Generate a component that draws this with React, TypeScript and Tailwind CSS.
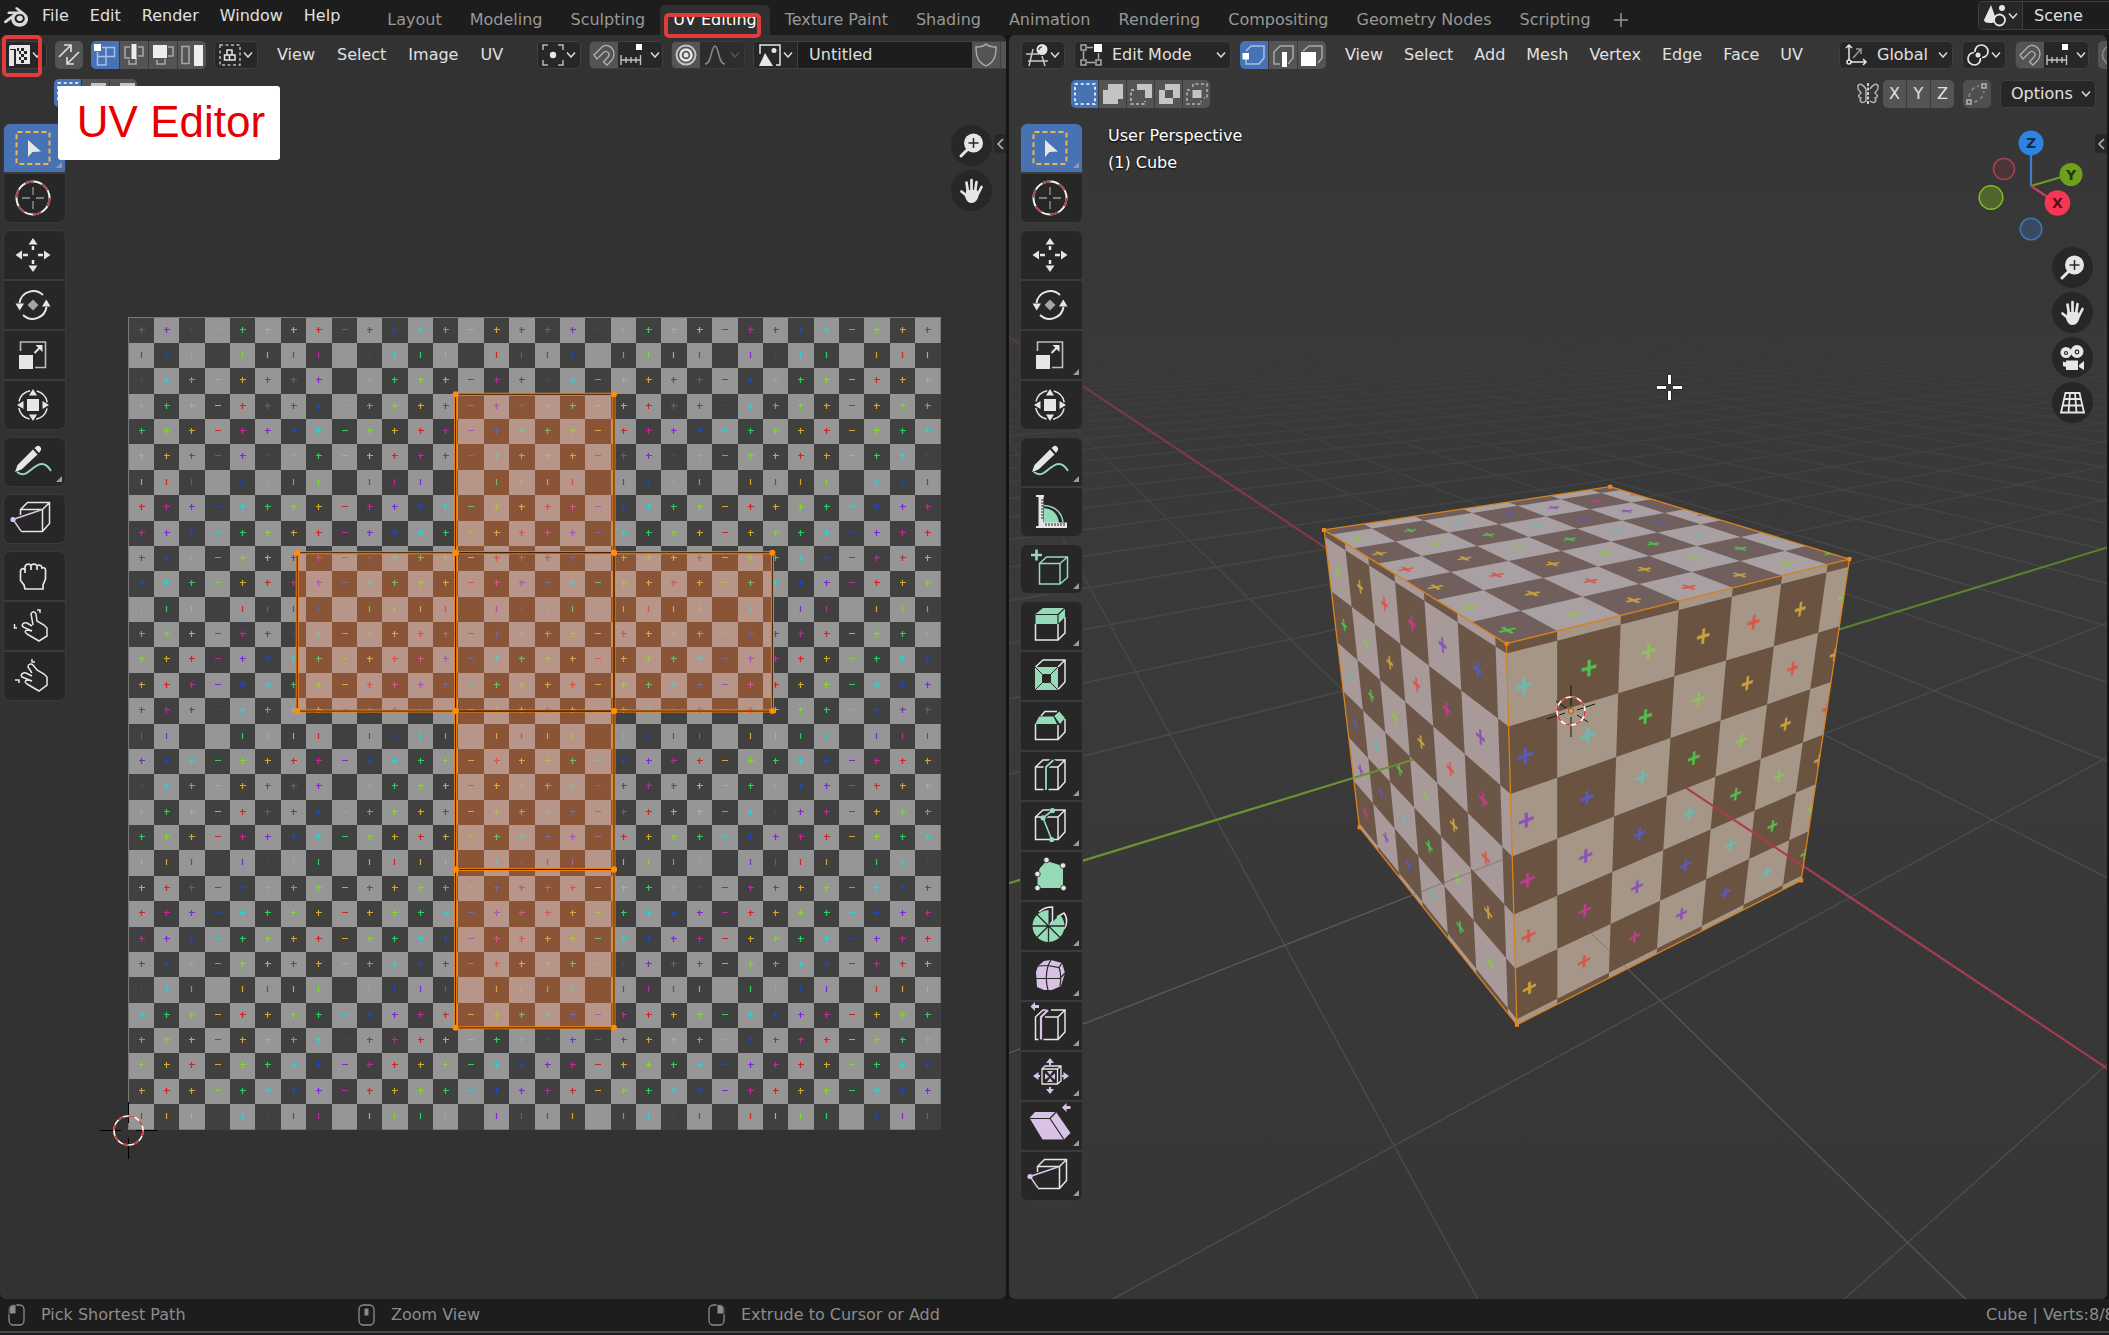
import { useState } from "react"
import type { ReactNode } from "react"
import clsx from "clsx"
import { SiBlender } from "react-icons/si"

const GREEN = "#95dbb8"
const PURPLE = "#d8c3e6"
const LIGHT = "#e6e6e6"

// ---------- color grid texture ----------

const CELLS = 32
// hue steps of 45 degrees
const HUES = ["#cf2424", "#d8a62c", "#86d42e", "#2bd05c", "#2cd3d6", "#2247bd", "#7a2ad0", "#c3289a"]
const SOFT_HUES = ["#d9564a", "#c9a23e", "#93bd5c", "#52bf4e", "#6fb8b0", "#5a5bb8", "#8c52b8", "#bd3e8c"]

const isDark = (c: number, r: number) => (c + r) % 2 === 0
const hueIndex = (c: number, r: number) => Math.abs(c - (CELLS - 1 - r)) % 8

// unwrapped cube, in texture cells
const U = [6.645, 12.887, 19.129, 25.371]
const V = [3.023, 9.265, 15.507, 21.749, 27.991]

// ---------- camera ----------

// x, y, z in the scene and where that point lands on the viewport
const REFERENCES = [
    [1, -1, 1, 1506.6, 643.6],
    [1, 1, 1, 1849.4, 559],
    [-1, -1, 1, 1323.9, 530],
    [-1, 1, 1, 1610.2, 486.7],
    [1, -1, -1, 1516.9, 1024.8],
    [1, 1, -1, 1801.2, 880.5],
    [-1, -1, -1, 1359.5, 827.3],
    [0, 0, 0, 1571, 711.2],
]
const CX = 1571
const CY = 711
const SCALE = 300

// least squares fit of the 3x4 projection matrix
function fitCamera() {
    const n = 11
    const m: number[][] = Array.from({ length: n }, () => new Array(n + 1).fill(0))
    for (const [x, y, z, px, py] of REFERENCES) {
        const u = (px - CX) / SCALE
        const v = (py - CY) / SCALE
        const rows = [
            [x, y, z, 1, 0, 0, 0, 0, -u * x, -u * y, -u * z, u],
            [0, 0, 0, 0, x, y, z, 1, -v * x, -v * y, -v * z, v],
        ]
        for (const row of rows)
            for (let i = 0; i < n; i++)
                for (let j = 0; j <= n; j++) m[i][j] += row[i] * row[j]
    }
    for (let i = 0; i < n; i++) {
        let best = i
        for (let k = i + 1; k < n; k++) if (Math.abs(m[k][i]) > Math.abs(m[best][i])) best = k
        ;[m[i], m[best]] = [m[best], m[i]]
        for (let k = 0; k < n; k++) {
            if (k === i) continue
            const f = m[k][i] / m[i][i]
            for (let j = i; j <= n; j++) m[k][j] -= f * m[i][j]
        }
    }
    return m.map((row, i) => row[n] / row[i])
}

type Vec = [number, number, number]
const cam = fitCamera()
const depth = ([x, y, z]: Vec) => cam[8] * x + cam[9] * y + cam[10] * z + 1

function project(p: Vec) {
    const [x, y, z] = p
    const w = depth(p)
    const u = (cam[0] * x + cam[1] * y + cam[2] * z + cam[3]) / w
    const v = (cam[4] * x + cam[5] * y + cam[6] * z + cam[7]) / w
    return `${(CX + u * SCALE).toFixed(2)} ${(CY + v * SCALE).toFixed(2)}`
}

const mix = (a: Vec, b: Vec, t: number): Vec => [a[0] + (b[0] - a[0]) * t, a[1] + (b[1] - a[1]) * t, a[2] + (b[2] - a[2]) * t]

// line in the scene, cut where it passes behind the camera
function line3d(a: Vec, b: Vec) {
    const near = 0.12
    const wa = depth(a)
    const wb = depth(b)
    if (wa < near && wb < near) return ""
    if (wa < near) a = mix(a, b, (near - wa) / (wb - wa))
    if (wb < near) b = mix(b, a, (near - wb) / (wa - wb))
    return `M${project(a)}L${project(b)}`
}

const REACH = 70
let gridPath = ""
for (let i = -REACH; i <= REACH; i++) {
    if (i === 0) continue
    gridPath += line3d([i, -REACH, 0], [i, REACH, 0])
    gridPath += line3d([-REACH, i, 0], [REACH, i, 0])
}

// ---------- cube faces ----------

type Face = {
    c: [number, number]
    r: [number, number]
    at: (c: number, r: number) => Vec
    dark: string
    light: string
}

const unit = (t: number, from: number, to: number) => ((t - from) / (to - from)) * 2 - 1

const FACES: Face[] = [
    { c: [U[2], U[3]], r: [V[1], V[2]], at: (c, r) => [-unit(c, U[2], U[3]), unit(r, V[1], V[2]), 1], dark: "#705f5d", light: "#a9a0a3" },
    { c: [U[1], U[2]], r: [V[0], V[1]], at: (c, r) => [unit(r, V[0], V[1]), -1, unit(c, U[1], U[2])], dark: "#6c5648", light: "#a79a99" },
    { c: [U[1], U[2]], r: [V[1], V[2]], at: (c, r) => [1, unit(r, V[1], V[2]), unit(c, U[1], U[2])], dark: "#6a5340", light: "#a59688" },
]

function CubeFace({ face }: { face: Face }) {
    const [c0, c1] = face.c
    const [r0, r1] = face.r
    // texture rectangle, cut at the border of the face
    const quad = (left: number, right: number, top: number, bottom: number) => {
        const a = Math.max(left, c0), b = Math.min(right, c1)
        const d = Math.max(top, r0), e = Math.min(bottom, r1)
        if (a >= b || d >= e) return ""
        return "M" + [[a, d], [b, d], [b, e], [a, e]].map(([s, t]) => project(face.at(s, t))).join("L") + "Z"
    }
    const marks = HUES.map(() => "")
    let dark = ""
    for (let c = Math.floor(c0); c < c1; c++)
        for (let r = Math.floor(r0); r < r1; r++) {
            if (isDark(c, r)) dark += quad(c, c + 1, r, r + 1)
            const x = c + 0.5, y = r + 0.5
            marks[hueIndex(c, r)] += quad(x - 0.115, x + 0.115, y - 0.023, y + 0.023)
            marks[hueIndex(c, r)] += quad(x - 0.023, x + 0.023, y - 0.115, y + 0.115)
        }
    return (
        <g>
            <path d={quad(c0, c1, r0, r1)} fill={face.light} />
            <path d={dark} fill={face.dark} />
            {marks.map((d, i) => <path key={i} d={d} fill={SOFT_HUES[i]} stroke={SOFT_HUES[i]} strokeWidth="0.400" />)}
        </g>
    )
}

const EDGES: [Vec, Vec][] = [
    [[-1, -1, 1], [-1, 1, 1]], [[-1, 1, 1], [1, 1, 1]], [[1, 1, 1], [1, -1, 1]], [[1, -1, 1], [-1, -1, 1]],
    [[1, -1, 1], [1, -1, -1]], [[1, 1, 1], [1, 1, -1]], [[-1, -1, 1], [-1, -1, -1]],
    [[-1, -1, -1], [1, -1, -1]], [[1, -1, -1], [1, 1, -1]],
]

function SceneCanvas() {
    return (
        <svg className="absolute inset-0 h-full w-full" viewBox="1009 35 1098 1264" preserveAspectRatio="xMidYMid slice" fill="none">
            <defs>
                <linearGradient id="fade" gradientUnits="userSpaceOnUse" x1="0" y1="290" x2="0" y2="800">
                    <stop offset="0" stopColor="#fff" stopOpacity="0" />
                    <stop offset="0.15" stopColor="#fff" stopOpacity="0.15" />
                    <stop offset="0.5" stopColor="#fff" stopOpacity="0.7" />
                    <stop offset="1" stopColor="#fff" />
                </linearGradient>
                <linearGradient id="axisFade" gradientUnits="userSpaceOnUse" x1="0" y1="300" x2="0" y2="480">
                    <stop offset="0" stopColor="#fff" stopOpacity="0.1" />
                    <stop offset="0.5" stopColor="#fff" stopOpacity="0.75" />
                    <stop offset="1" stopColor="#fff" stopOpacity="0.9" />
                </linearGradient>
                <mask id="floor" maskUnits="userSpaceOnUse" x="1009" y="35" width="1098" height="1264">
                    <rect x="1009" y="35" width="1098" height="1264" fill="url(#fade)" />
                </mask>
                <mask id="axes" maskUnits="userSpaceOnUse" x="1009" y="35" width="1098" height="1264">
                    <rect x="1009" y="35" width="1098" height="1264" fill="url(#axisFade)" />
                </mask>
            </defs>
            <path mask="url(#floor)" d={gridPath} stroke="#4b4b4b" strokeWidth="1.500" />
            <g mask="url(#axes)">
                <path d={line3d([-REACH, 0, 0], [REACH, 0, 0])} stroke="#93384a" strokeWidth="2" />
                <path d={line3d([0, -REACH, 0], [0, REACH, 0])} stroke="#5f8a2c" strokeWidth="2" />
            </g>
            {FACES.map((face, i) => <CubeFace key={i} face={face} />)}
            <path d={line3d([1, -1, 0], [1, -4, 0]) + line3d([1, -1, 0], [4, -1, 0])} stroke="#6b6460" strokeOpacity="0.6" />
            <path d={line3d([1, 0, 0], [REACH, 0, 0])} stroke="#a83c4d" strokeWidth="2" />
            <path d={line3d([0, -1, 0], [0, -REACH, 0])} stroke="#6b8f30" strokeWidth="2" />
            <path d={EDGES.map(([a, b]) => line3d(a, b)).join("")} stroke="#d8821c" strokeWidth="1.300" />
            {REFERENCES.slice(0, 7).map(([, , , x, y]) => (
                <rect key={`${x}-${y}`} x={x - 2} y={y - 2} width="4" height="4" fill="#f0851a" />
            ))}
            <path d="M1571 685V706M1571 717V737M1547 719L1565 713M1577 710L1595 704M1556 701L1566 708M1577 715L1588 722" stroke="#1a1410" />
            <circle cx="1571" cy="711" r="14" stroke="#fff" strokeWidth="1.600" />
            <circle cx="1571" cy="711" r="14" stroke="#d9352f" strokeWidth="1.600" strokeDasharray="5.500 5.500" />
            <circle cx="1571" cy="711" r="2.600" fill="#f79a3a" stroke="#5a3a20" strokeWidth="0.600" />
            <path d="M1657 387.500H1666M1673 387.500H1682M1669.500 375V384M1669.500 391V400" stroke="#222" strokeWidth="5" />
            <path d="M1657 387.500H1666M1673 387.500H1682M1669.500 375V384M1669.500 391V400" stroke="#fff" strokeWidth="3" />
        </svg>
    )
}

// ---------- uv canvas ----------

const X0 = 128.6
const Y0 = 317.6
const CELL = 25.375
const px = (c: number) => X0 + c * CELL
const py = (r: number) => Y0 + r * CELL

let darkCells = ""
const uvMarks = HUES.map(() => "")
for (let c = 0; c < CELLS; c++)
    for (let r = 0; r < CELLS; r++) {
        const x = Math.round(px(c)), y = Math.round(py(r))
        if (isDark(c, r)) darkCells += `M${x} ${y}H${Math.round(px(c + 1))}V${Math.round(py(r + 1))}H${x}Z`
        const i = hueIndex(c, r)
        if (r % 5 !== 1) uvMarks[i] += `M${x + 10} ${y + 11.5}h6`
        if (c % 5 !== 3) uvMarks[i] += `M${x + 12.5} ${y + 9}v6`
    }

const UV_FACES = [[1, 0], [0, 1], [1, 1], [2, 1], [1, 2], [1, 3]]

function UvCanvas() {
    const side = px(U[1]) - px(U[0])
    const faces = UV_FACES.map(([i, j]) => `M${px(U[i])} ${py(V[j])}h${side}v${side}h${-side}Z`).join("")
    return (
        <svg className="absolute inset-0 h-full w-full" viewBox="0 35 1006 1264" preserveAspectRatio="xMidYMid slice" fill="none">
            <clipPath id="selected"><path d={faces} /></clipPath>
            <rect x="128.500" y="317.500" width="812" height="812" fill="#969696" stroke="#7a7a7a" />
            <path d={darkCells} fill="#404040" />
            <g clipPath="url(#selected)">
                <rect x="129" y="318" width="812" height="812" fill="#b79689" />
                <path d={darkCells} fill="#8a5537" />
            </g>
            {uvMarks.map((d, i) => <path key={i} d={d} stroke={HUES[i]} strokeWidth="1.200" />)}
            <g clipPath="url(#selected)" opacity="0.400">
                {uvMarks.map((d, i) => <path key={i} d={d} stroke="#e8a080" />)}
            </g>
            <path d={faces} stroke="#f08414" strokeWidth="3" />
            <path d={faces} stroke="#3c2008" strokeWidth="1" />
            {UV_FACES.flatMap(([i, j]) =>
                [[i, j], [i + 1, j], [i, j + 1], [i + 1, j + 1]].map(([a, b]) => (
                    <circle key={`${i}${j}${a}${b}`} cx={px(U[a])} cy={py(V[b])} r="3" fill="#ff8c0a" />
                ))
            )}
            <path d="M100 1130.500H121M136 1130.500H157M128.500 1102V1123M128.500 1138V1159" stroke="#000" />
            <circle cx="128.500" cy="1130.500" r="14.500" stroke="#fff" strokeWidth="1.600" />
            <circle cx="128.500" cy="1130.500" r="14.500" stroke="#d9352f" strokeWidth="1.600" strokeDasharray="5.700 5.700" />
        </svg>
    )
}

// ---------- tool icons ----------

const CUBE = "M3.500 9H26V31.500H3.500ZM3.500 9L11 2H33V24L26 31.500M26 9L33 2"
const pin = (d: string, fill = LIGHT) => <path d={d} fill={fill} />

const TOOLS: Record<string, ReactNode> = {
    "Select Box": (
        <>
            <rect x="1.500" y="2" width="33" height="32" rx="1" stroke="#efb54a" strokeWidth="2" strokeDasharray="5 3" />
            {pin("M13 10V27L17.500 22L26 21.500Z")}
        </>
    ),
    Cursor: (
        <>
            <circle cx="18" cy="18" r="16.500" stroke="#f5f5f5" strokeWidth="2" />
            <circle cx="18" cy="18" r="16.500" stroke="#a04848" strokeWidth="2" strokeDasharray="8.600 8.700" />
            <path d="M7 18H15M21 18H29M18 7V15M18 21V29" stroke="#999" strokeWidth="1.300" />
        </>
    ),
    Move: (
        <>
            {pin("M18 1L22.500 7.500H13.500ZM18 35L22.500 28.500H13.500ZM.500 18L7 13.500V22.500ZM35.500 18L29 13.500V22.500Z")}
            <path d="M18 9V13M18 23V27M8 18H13M23 18H28" stroke={LIGHT} strokeWidth="2.500" />
        </>
    ),
    Rotate: (
        <>
            <path d="M4.500 16A14 14 0 0 1 28 8M31.500 20A14 14 0 0 1 8 28" stroke={LIGHT} strokeWidth="2" />
            {pin("M.500 16.500H9L4.700 23.500ZM27 19.500H35.500L31.300 12.500Z")}
            {pin("M18 12.500L23.500 18L18 23.500L12.500 18Z", "#a5a5a5")}
        </>
    ),
    Scale: (
        <>
            <path d="M5.500 14V5H30.500V30.500H20" stroke="#bdbdbd" strokeWidth="1.600" />
            {pin("M4 18H18V32H4ZM27.500 8V15L20.500 8Z")}
            <path d="M19.500 16L26 9.500" stroke={LIGHT} strokeWidth="2" />
        </>
    ),
    Transform: (
        <>
            <circle cx="18" cy="18" r="14.500" stroke={LIGHT} strokeWidth="1.500" strokeDasharray="16 6.780" strokeDashoffset="-3.400" />
            {pin("M12 12H24V24H12ZM18 2L22 8.500H14ZM18 34L22 27.500H14ZM2 18L8.500 14V22ZM34 18L27.500 14V22Z")}
        </>
    ),
    Annotate: (
        <>
            <path d="M2 28C12 36 17 20 27 20C32 20 34 24 36 27" stroke={GREEN} strokeWidth="1.800" />
            {pin("M0 28L2.500 21L18 5.500L22.500 10.500L6.500 25.500ZM19.500 4L22 2C24 1 27 4 26 6L24 9Z")}
        </>
    ),
    Measure: (
        <>
            <path d="M12 29V14C21 15 26 20 27 29Z" fill={GREEN} />
            <path d="M12 11.500C23 12 30 19 31 28" stroke={GREEN} strokeWidth="1.500" />
            {pin("M4 1H12V3H11.500V28.500H35V34H4V32H6.500V3H4Z")}
            <path d="M9 6H12M9 9H12M9 12H12M9 15H12M9 18H12M9 21H12M9 24H12M14 29V32M17 29V32M20 29V32M23 29V32M26 29V32M29 29V32M32 29V32" stroke="#272727" />
        </>
    ),
    "Add Cube": (
        <>
            <path d="M7.500 12.500H28V33H7.500ZM7.500 12.500L14.500 6H35.500V26.500L28 33M28 12.500L35.500 6" stroke={GREEN} strokeWidth="1.500" />
            <path d="M-1 4H10M4.500 -1.500V9.500" stroke={GREEN} strokeWidth="2.600" />
        </>
    ),
    "Extrude Region": (
        <>
            <path d="M3.500 16V32H26V16M26 32L33 25V9" stroke={LIGHT} strokeWidth="1.500" />
            <path d="M3.500 6L11 0H33V9L26 16H3.500Z" fill={GREEN} />
            <path d="M3.500 6.500H26V16M26 6.500L33 0" stroke="#272727" strokeWidth="1.200" />
        </>
    ),
    "Inset Faces": (
        <>
            <path d="M3.500 9L11 2H33V24L26 31.500M26 9L33 2" stroke={LIGHT} strokeWidth="1.500" />
            <path d="M3 9H26V32H3Z" fill={GREEN} />
            <path d="M10 16H19V25H10Z" fill="#272727" />
            <path d="M3 9L10 16M26 9L19 16M3 32L10 25M26 32L19 25" stroke="#272727" />
        </>
    ),
    Bevel: (
        <>
            <path d="M3.500 16V31.500H26V17M26 31.500L33 24V11M9 8L13 3.500H25" stroke={LIGHT} strokeWidth="1.500" />
            <path d="M3.300 16L7 8.500H21.300L25 16ZM22.300 8L27.300 3.500L33 10L28 16Z" fill={GREEN} />
        </>
    ),
    "Loop Cut": (
        <>
            <path d={CUBE} stroke={LIGHT} strokeWidth="1.500" />
            <path d="M14 33V9L22 1" stroke="#272727" strokeWidth="5" />
            <path d="M14 32V9L21.500 2" stroke={GREEN} strokeWidth="1.800" />
        </>
    ),
    Knife: (
        <>
            <path d={CUBE} stroke={LIGHT} strokeWidth="1.500" />
            <path d="M20.500 2.500L11 9.800L19.700 31.500" stroke="#272727" strokeWidth="4" />
            <path d="M20.500 2.500L11 9.800L19.700 31.500" stroke={GREEN} strokeWidth="1.600" />
            <circle cx="20.500" cy="2.500" r="2.600" fill={GREEN} />
            <circle cx="11" cy="9.800" r="2.600" fill={GREEN} />
            <circle cx="19.700" cy="31.500" r="2.600" fill={GREEN} />
        </>
    ),
    "Poly Build": (
        <>
            <path d="M14.500 3L31 8V30H5.500V16L8 10Z" fill={GREEN} />
            {[[14.5, 2], [31, 7.5], [5.5, 16], [5.5, 30], [31.5, 30]].map(([x, y]) => (
                <circle key={`${x}${y}`} cx={x} cy={y} r="2.800" fill={LIGHT} stroke="#272727" strokeWidth="0.800" />
            ))}
        </>
    ),
    Spin: (
        <>
            <path d="M7 4C11 0 15 -1 20.500 -1V13L18 17M25 9L32 5C36 10 35 18 32 21" stroke={LIGHT} strokeWidth="1.500" />
            <path d="M16.500 18L27.800 6.700A16 16 0 1 1 16.500 2Z" fill={GREEN} />
            <path d="M0 18H33M16.500 18V35M16.500 18L5 6.500M16.500 18L5 29.500M16.500 18L28 29.500" stroke="#272727" strokeWidth="1.300" />
        </>
    ),
    Smooth: (
        <>
            <path d="M6 8L12 3L19 2L30 5L33 15L29 28L20 32L12 32L5 29L4 14Z" fill={PURPLE} />
            <path d="M4 20.500H28L33 15M16 8C14 15 14 25 16 32M6 8L16 7.500L27 9.500L30 5M27 9.500C29 15 29 22 28 28M16 7.500L19 2" stroke="#272727" strokeWidth="1.200" />
        </>
    ),
    "Edge Slide": (
        <>
            <path d="M6.500 31.500H3.500V9L11 2H14M13 9H26V31.500H11.500M19 2H33V24L26 31.500M26 9L33 2" stroke={LIGHT} strokeWidth="1.500" />
            <path d="M9 31.500V9L16 2" stroke={PURPLE} strokeWidth="2.200" />
            {pin("M-1.500 -1.500L3 -6V-3H7V0H3V3Z", PURPLE)}
        </>
    ),
    "Shrink Fatten": (
        <>
            <path d="M10 11H25.500V26H10ZM10 11L13 8H29V23L25.500 26M25.500 11L29 8" stroke={LIGHT} strokeWidth="1.300" />
            {pin("M18 0L22 5H19V7H17V5H14ZM18 36L22 31H19V29H17V31H14ZM1 18L6.500 14V17H8V19H6.500V22ZM37 18L31.500 14V17H30V19H31.500V22ZM18 17L21 13H15ZM18 20L21 24H15ZM17 18.500L13 15.500V21.500ZM19 18.500L23 15.500V21.500Z", PURPLE)}
        </>
    ),
    Shear: (
        <>
            <path d="M-2.500 10L3 4H24L38.500 25L32 31.500H10.500Z" fill={PURPLE} />
            <path d="M-2.500 10.500H18L24 4M18 10.500L32 31.500" stroke="#272727" strokeWidth="1.200" />
            {pin("M30 -.500L34.500 -5V-2H38.500V1H34.500V4Z", PURPLE)}
        </>
    ),
    "Rip Region": (
        <>
            <path d="M5.500 14V8.500L12.500 1.500H34.500V22.500L27.500 30.500H6M27.500 30.500V8.500L34.500 1.500M5.500 8.500H27.500" stroke={LIGHT} strokeWidth="1.500" />
            <path d="M6 30L-2 18.500L26 9" stroke={PURPLE} strokeWidth="1.500" />
            <circle cx="-2" cy="18.500" r="2.600" fill={PURPLE} />
        </>
    ),
    Grab: (
        <path d="M10 31L9 27L5.500 22.500V13C6 10 9 10 10 12V8.500C11 5.500 15 5.500 16 8C17 5.500 21 5.500 22 8C24 6 27 7.500 27 10C30 9 31 11 30.500 14V21L28 27V31ZM10 12V15M16 8V12M22 8V12" stroke={LIGHT} strokeWidth="1.700" />
    ),
    Relax: (
        <path d="M18 17L16 6C17 3 20 3 21 6L22 13L29 17L32 20V28L24 33L12 26C9 24 10 22 13 22L17 23L8 19C6 16 9 14 12 15L17 18M22 2H25V5M2 20H-.500V16" stroke={LIGHT} strokeWidth="1.500" />
    ),
    Pinch: (
        <path d="M17 15L13 9C13 6 16 5 18 7L22 12L29 16L32 19V27L24 33L12 26C9 24 10 22 13 22L17 23L7 19C5 17 8 14 11 15L17 18M17 1V4H20M0 22H4V25" stroke={LIGHT} strokeWidth="1.500" />
    ),
}

function ToolBar({ groups, corners, label }: { groups: string[][]; corners: string[]; label: string }) {
    const [active, setActive] = useState("Select Box")
    return (
        <div role="toolbar" aria-label={label} className="flex flex-col gap-[9px]">
            {groups.map((group) => (
                <div key={group[0]} className="flex w-[61px] flex-col gap-[2px] overflow-hidden rounded-md bg-[#3a3a3a] shadow-[0_0_0_1px_#3a3a3a]">
                    {group.map((tool) => (
                        <button
                            key={tool}
                            type="button"
                            aria-label={tool}
                            aria-pressed={tool === active}
                            onClick={() => setActive(tool)}
                            className={clsx("relative flex h-12 items-center justify-center", tool === active ? "bg-[#4772b3]" : "bg-[#272727]")}
                        >
                            <svg viewBox="0 0 36 36" fill="none" className="mr-[3px] h-9 w-9 overflow-visible">{TOOLS[tool]}</svg>
                            {corners.includes(tool) && (
                                <svg viewBox="0 0 6 6" className="absolute right-[3px] bottom-1 h-[6px] w-[6px]"><path d="M6 0V6H0Z" fill="#9a9a9a" /></svg>
                            )}
                        </button>
                    ))}
                </div>
            ))}
        </div>
    )
}

// ---------- header pieces ----------

function Glyph({ children }: { children: ReactNode }) {
    return <svg viewBox="0 0 22 22" fill="none" stroke={LIGHT} strokeWidth="1.500" className="h-[22px] w-[22px] shrink-0 overflow-visible">{children}</svg>
}

function Chevron({ dim }: { dim?: boolean }) {
    return (
        <svg viewBox="0 0 10 6" fill="none" className="h-[6px] w-[10px] shrink-0">
            <path d="M1 .500L5 5L9 .500" stroke={dim ? "#555" : "#dcdcdc"} strokeWidth="1.500" />
        </svg>
    )
}

function DropButton({ label, children }: { label: string; children: ReactNode }) {
    return (
        <button type="button" aria-label={label} className="flex h-7 w-11 shrink-0 items-center justify-center gap-[2px] rounded-[5px] border border-[#3f3f3f] bg-[#272727]">
            <Glyph>{children}</Glyph>
            <Chevron />
        </button>
    )
}

type Mode = { name: string; icon: ReactNode }

function ModeButtons({ modes, narrow }: { modes: Mode[]; narrow?: boolean }) {
    const [active, setActive] = useState(0)
    return (
        <div className="flex h-7 shrink-0 gap-px overflow-hidden rounded-[5px] bg-[#3a3a3a]">
            {modes.map((mode, i) => (
                <button
                    key={mode.name}
                    type="button"
                    aria-label={mode.name}
                    aria-pressed={i === active}
                    onClick={() => setActive(i)}
                    className={clsx("flex items-center justify-center", narrow ? "w-[27px]" : "w-7", i === active ? "bg-[#4772b3]" : "bg-[#545454]")}
                >
                    <Glyph>{mode.icon}</Glyph>
                </button>
            ))}
        </div>
    )
}

function MenuBar({ items, tight }: { items: string[]; tight?: boolean }) {
    return (
        <nav className={clsx("flex shrink-0", tight && "gap-px")}>
            {items.map((item) => (
                <button key={item} type="button" className={clsx("whitespace-nowrap", tight ? "px-[10px]" : "px-[11px]")}>{item}</button>
            ))}
        </nav>
    )
}

function Picker({ label, value, options, className, children }: { label: string; value: string; options: string[]; className: string; children: ReactNode }) {
    return (
        <label className={clsx("relative flex h-7 shrink-0 items-center rounded-[5px] border border-[#3f3f3f] bg-[#272727] pr-1 pl-[5px]", className)}>
            <Glyph>{children}</Glyph>
            <select aria-label={label} defaultValue={value} className="min-w-0 flex-1 appearance-none bg-transparent pl-[10px]">
                {options.map((option) => <option key={option}>{option}</option>)}
            </select>
            <Chevron />
        </label>
    )
}

function SnapGroup() {
    return (
        <div className="flex h-7 shrink-0 overflow-hidden rounded-[5px] border border-[#3f3f3f] bg-[#272727]">
            <button type="button" aria-label="Snap" className="flex w-7 items-center justify-center bg-[#545454]">
                <Glyph>
                    <path d="M1 11L9 3C13 -1 21 3 21 10C21 13 20 15 18 17L14 21L10.500 18L15 13C18 10 14 6 11 8L4 15Z" stroke="#b0b0b0" strokeWidth="1.300" />
                </Glyph>
            </button>
            <button type="button" aria-label="Snapping options" className="flex w-11 items-center justify-center gap-2">
                <Glyph>
                    <path d="M1 11V21M6 13V19M11 13V19M16 13V19M20.500 11V21M1 16H20.500" stroke="#c4c4c4" strokeWidth="1.400" />
                    <rect x="16" y="0" width="6" height="6" fill="#fff" stroke="none" />
                </Glyph>
                <Chevron />
            </button>
        </div>
    )
}

function CollapseTab() {
    return (
        <button type="button" aria-label="Show sidebar" className="absolute top-[99px] right-0 flex h-[19px] w-3 items-center justify-center rounded-l bg-[#272727]">
            <svg viewBox="0 0 7 12" fill="none" className="h-3 w-[7px]"><path d="M6 1L1 6L6 11" stroke="#bdbdbd" strokeWidth="1.500" /></svg>
        </button>
    )
}

const NAV: Record<string, ReactNode> = {
    Zoom: (
        <>
            <circle cx="14.500" cy="10" r="9.500" fill={LIGHT} />
            <path d="M9 16L2 23" stroke={LIGHT} strokeWidth="3" strokeLinecap="round" />
            <path d="M9.500 10H19.500M14.500 5V15" stroke="#272727" strokeWidth="1.500" />
        </>
    ),
    Pan: (
        <>
            <path d="M9 14L7.500 4.500M12.500 13V2M16 14L17.500 4M19 16L22.500 9M8 18L2.500 13.500" stroke={LIGHT} strokeWidth="2.700" strokeLinecap="round" />
            <path d="M7.300 12H18L20 16C19 22 16 25 12.500 25C9.500 25 7.500 23 6 18.500Z" fill={LIGHT} />
        </>
    ),
    Camera: (
        <>
            <circle cx="6" cy="7.500" r="5.500" fill={LIGHT} />
            <circle cx="17" cy="6.500" r="6.500" fill={LIGHT} />
            <path d="M6 15.500H18V25H6V22L3 21V16.500L6 17.500ZM19 20L24 16V25L19 22Z" fill={LIGHT} />
            <circle cx="6" cy="8" r="1.500" stroke="#272727" strokeWidth="1.200" />
            <circle cx="17" cy="7" r="1.800" stroke="#272727" strokeWidth="1.200" />
        </>
    ),
    Perspective: <path d="M5.500 3H19.500L24 22.500H1ZM4 9H21M2.500 15.500H22.500M10 3L8.500 22.500M15 3L16.500 22.500" stroke={LIGHT} strokeWidth="1.800" />,
}

function NavButtons({ names }: { names: string[] }) {
    return (
        <div className="flex flex-col gap-1">
            {names.map((name) => (
                <button key={name} type="button" aria-label={name} className="flex h-[41px] w-[41px] items-center justify-center rounded-full bg-[#272727]">
                    <svg viewBox="0 0 25 25" fill="none" className="h-[25px] w-[25px] overflow-visible">{NAV[name]}</svg>
                </button>
            ))}
        </div>
    )
}

function AxisGizmo() {
    return (
        <svg viewBox="1978 128 108 116" fill="none" className="h-[116px] w-[108px]" fontFamily="DejaVu Sans, sans-serif" fontWeight="bold" fontSize="14" textAnchor="middle">
            <circle cx="2005" cy="169" r="10.500" fill="#4d3438" stroke="#a34355" strokeWidth="1.500" />
            <circle cx="2032" cy="229" r="10.800" fill="#384a60" stroke="#3f74b8" strokeWidth="1.500" />
            <circle cx="1992" cy="197.500" r="11.800" fill="#50662c" stroke="#84bd23" strokeWidth="1.500" />
            <path d="M2032 186V150" stroke="#3a7fd0" strokeWidth="2.200" />
            <path d="M2032 186L2066 176" stroke="#6c9c22" strokeWidth="2.200" />
            <path d="M2032 186L2050 198" stroke="#c84054" strokeWidth="2.200" />
            <circle cx="2032" cy="143" r="12.500" fill="#2f84e3" />
            <circle cx="2072" cy="174.500" r="11.500" fill="#6f9f1e" />
            <circle cx="2058.500" cy="203" r="12.800" fill="#f63652" />
            <text x="2032" y="148" fill="#0f2c50">Z</text>
            <text x="2072" y="180" fill="#24370a">Y</text>
            <text x="2058.500" y="208" fill="#56101c">X</text>
        </svg>
    )
}

// ---------- mode icons ----------

const UV_MODES: Mode[] = [
    { name: "Vertex select", icon: <><path d="M8 3.500H20.500V12.500H12V21H3.500V8M3.500 12.500H12V3.500" stroke="#a9c1e8" /><rect x="0" y="0" width="7" height="7" fill="#fff" stroke="none" /></> },
    { name: "Edge select", icon: <><path d="M7 3H2V14H7M15 3H20V12H15M6 16V20H13V14" stroke="#a8a8a8" /><rect x="8.500" y="0" width="5" height="15" fill="#eee" stroke="none" /></> },
    { name: "Face select", icon: <><path d="M16 3H21V12H16M5 16V20H13V15" stroke="#a8a8a8" /><rect x="1" y="1" width="14" height="13" fill="#eee" stroke="none" /></> },
    { name: "Island select", icon: <><rect x="1" y="2.500" width="7" height="17" stroke="#a8a8a8" /><rect x="13" y="1" width="9" height="21" fill="#eee" stroke="none" /></> },
]

const MESH_MODES: Mode[] = [
    { name: "Vertex", icon: <><path d="M3 7L8 2H21V14L16 20H3V14" stroke="#a9c1e8" /><rect x="-.500" y="9" width="6.500" height="6.500" fill="#fff" stroke="none" /></> },
    { name: "Edge", icon: <><path d="M8 20H2V8L8 2H21V14L16 20" stroke="#a8a8a8" /><rect x="10" y="8" width="5" height="15" fill="#fff" stroke="none" /></> },
    { name: "Face", icon: <><path d="M2 7L8 2H21V14L17 19" stroke="#a8a8a8" /><rect x="0" y="8" width="15" height="14" fill="#fff" stroke="none" /></> },
]

const BOX_MODES: Mode[] = [
    { name: "Set", icon: <rect x="1" y="1" width="20" height="20" stroke="#fff" strokeWidth="1.600" strokeDasharray="3 2.700" /> },
    { name: "Extend", icon: <path d="M6 1H21V16H16V21H1V7H6Z" fill="#c4c4c4" stroke="none" /> },
    { name: "Subtract", icon: <><path d="M7 1H22V15H15V7H7Z" fill="#c4c4c4" stroke="none" /><path d="M4 7H1V21H15V18" stroke="#c4c4c4" strokeDasharray="3 2.500" /></> },
    { name: "Difference", icon: <path d="M7 1H22V15H15V21H1V7H7ZM7 7V15H15V7Z" fillRule="evenodd" fill="#c4c4c4" stroke="none" /> },
    { name: "Intersect", icon: <><path d="M7 4V1H21V15H18M4 7H1V21H15V18" stroke="#b4b4b4" strokeDasharray="3 2.500" /><rect x="6.500" y="7" width="9" height="8" fill="#c4c4c4" stroke="none" /></> },
]

const WORKSPACES = ["Layout", "Modeling", "Sculpting", "UV Editing", "Texture Paint", "Shading", "Animation", "Rendering", "Compositing", "Geometry Nodes", "Scripting"]

function TopBar() {
    return (
        <header className="relative z-20 flex h-[35px] shrink-0 items-start bg-[#1d1d1d]">
            <button type="button" aria-label="About" className="mt-[5px] ml-1 h-6 w-7">
                <SiBlender className="h-6 w-6 text-[#d9d9d9]" />
            </button>
            <div className="flex h-8">
                <MenuBar tight items={["File", "Edit", "Render", "Window", "Help"]} />
            </div>
            <nav className="mt-[5px] ml-6 flex h-[30px] gap-[2px] text-[#989898]" aria-label="Workspaces">
                {WORKSPACES.map((name) => {
                    const current = name === "UV Editing"
                    return (
                        <button key={name} type="button" className={clsx("relative rounded-t-[5px] px-[13px] whitespace-nowrap", current && "bg-[#303030] text-white")}>
                            {name}
                            {current && <span className="absolute top-2 right-[9px] left-1 h-[25px] rounded-[5px] border-4 border-[#e03c3c]" />}
                        </button>
                    )
                })}
                <button type="button" aria-label="Add workspace" className="flex items-center px-2">
                    <svg viewBox="0 0 14 14" className="h-[14px] w-[14px]"><path d="M7 0V14M0 7H14" stroke="#989898" strokeWidth="1.500" /></svg>
                </button>
            </nav>
            <div className="mt-px ml-auto flex h-[29px] shrink-0 overflow-hidden rounded-l-[5px] border border-r-0 border-[#3f3f3f] bg-[#1d1d1d]">
                <button type="button" aria-label="Browse scene" className="flex w-11 items-center justify-center gap-[2px] border-r border-[#3f3f3f] bg-[#272727]">
                    <Glyph>
                        <path d="M7 0L12 14C12 17 10 18 6 18C2 18 0 17 0 15Z" fill={LIGHT} stroke="none" />
                        <circle cx="18" cy="3" r="3" fill={LIGHT} stroke="none" />
                        <circle cx="15.500" cy="15" r="5.500" fill="#272727" stroke={LIGHT} strokeWidth="1.800" />
                    </Glyph>
                    <Chevron />
                </button>
                <input aria-label="Scene name" defaultValue="Scene" className="w-[86px] bg-transparent pl-[11px] outline-none" />
            </div>
        </header>
    )
}

function UvHeader() {
    return (
        <div className="relative flex flex-col gap-[10px] pt-[6px]">
            <div className="flex h-7 gap-2 pl-[3px]">
                <DropButton label="UV Editor">
                    <path d="M2 1H22V20H8V22H1V3Z" fill={LIGHT} stroke="none" />
                    <path d="M9 4H11V7H9ZM13 4H16V7H13ZM11 7H13V10H11ZM16 7H19V10H16ZM13 10H16V13H13ZM11 13H13V16H11ZM16 13H19V16H16ZM13 16H16V19H13ZM6 6H8V22H6ZM2 5H8V6H2Z" fill="#272727" stroke="none" />
                </DropButton>
                <button type="button" aria-label="Sync selection" className="flex w-7 shrink-0 items-center justify-center rounded-[5px] bg-[#545454]">
                    <Glyph><path d="M1 13L13 1M6 1H13V8M9 20L21 8M9 13V20H16" stroke="#dcdcdc" strokeWidth="1.700" /></Glyph>
                </button>
                <ModeButtons modes={UV_MODES} />
                <DropButton label="Sticky selection">
                    <rect x="1" y="1" width="20" height="20" stroke="#b8b8b8" strokeDasharray="3 2.500" />
                    <path d="M8 6H13V11H8ZM5.500 11H10.500V16H5.500ZM10.500 11H16V16H10.500Z" />
                </DropButton>
                <MenuBar items={["View", "Select", "Image", "UV"]} />
                <div className="ml-[15px] flex shrink-0">
                    <DropButton label="Pivot">
                        <path d="M1 6V1H6M16 1H21V6M21 16V21H16M6 21H1V16" stroke="#b8b8b8" />
                        <circle cx="11" cy="11" r="3.200" fill={LIGHT} stroke="none" />
                    </DropButton>
                </div>
                <SnapGroup />
                <div className="flex h-7 shrink-0 overflow-hidden rounded-[5px] border border-[#3a3a3a] bg-[#2d2d2d]">
                    <button type="button" aria-label="Proportional editing" className="flex w-7 items-center justify-center bg-[#545454]">
                        <Glyph>
                            <circle cx="11" cy="11" r="9.500" stroke="#c4c4c4" strokeWidth="2" />
                            <circle cx="11" cy="11" r="5.500" strokeWidth="2.500" />
                            <circle cx="11" cy="11" r="2.500" fill={LIGHT} stroke="none" />
                        </Glyph>
                    </button>
                    <button type="button" aria-label="Falloff" className="flex w-11 items-center justify-center gap-1">
                        <Glyph><path d="M1 20C8 20 7 2 11 2C15 2 14 20 21 20" stroke="#8a8a8a" /></Glyph>
                        <Chevron dim />
                    </button>
                </div>
                <div className="flex h-7 shrink-0 overflow-hidden rounded-[5px] border border-[#3f3f3f] bg-[#1d1d1d]">
                    <button type="button" aria-label="Browse image" className="flex w-11 items-center justify-center gap-[2px] border-r border-[#3f3f3f] bg-[#272727]">
                        <Glyph>
                            <path d="M1 10V1H21V21H17" />
                            <path d="M0 22L6 9L14 22Z" fill={LIGHT} stroke="none" />
                            <circle cx="15" cy="6.500" r="2.500" fill={LIGHT} stroke="none" />
                        </Glyph>
                        <Chevron />
                    </button>
                    <input aria-label="Image name" defaultValue="Untitled" className="w-[174px] bg-transparent pl-[11px] outline-none" />
                    <button type="button" aria-label="Fake user" className="flex w-7 items-center justify-center bg-[#545454]">
                        <Glyph><path d="M11 0C14 3 17 3 21 3C21 13 19 18 11 22C3 18 1 13 1 3C5 3 8 3 11 0Z" stroke="#b0b0b0" strokeWidth="1.300" /></Glyph>
                    </button>
                    <button type="button" aria-label="New image" className="w-7 border-l border-[#3f3f3f] bg-[#545454]" />
                </div>
            </div>
            <div className="flex pl-[54px]"><ModeButtons narrow modes={BOX_MODES.slice(0, 3)} /></div>
            <span className="absolute top-0 left-[2px] h-[42px] w-10 rounded-[5px] border-4 border-[#e03c3c]" />
            <div className="absolute top-[51px] left-[58px] z-10 flex h-[74px] w-[222px] items-center justify-center rounded-[3px] bg-white pb-[2px] pl-1 font-['Liberation_Sans',Arial,sans-serif] text-[44px] leading-none text-[#e60000]">
                UV Editor
            </div>
        </div>
    )
}

function SceneHeader() {
    return (
        <div className="relative flex flex-col gap-[11px] pt-[6px]">
            <div className="flex h-7 gap-[9px] pl-3">
                <DropButton label="3D Viewport">
                    <path d="M0 10H13M2 17H22M7 5L3 22M16 12L19 22" stroke="#c8c8c8" />
                    <circle cx="16" cy="5.500" r="5.500" fill={LIGHT} stroke="none" />
                    <path d="M13 6C13 4 14 3 16 3" stroke="#555" />
                </DropButton>
                <Picker label="Mode" value="Edit Mode" options={["Edit Mode", "Object Mode"]} className="w-[157px]">
                    <path d="M3.500 7V15M7 3.500H13M18.500 9V15M7 18.500H15" stroke="#a8a8a8" />
                    <path d="M1 1H6V6H1ZM1 16H6V21H1ZM16 16H21V21H16Z" stroke="#a8a8a8" />
                    <rect x="14" y="0" width="8" height="8" fill="#fff" stroke="none" />
                </Picker>
                <ModeButtons modes={MESH_MODES} />
                <MenuBar tight items={["View", "Select", "Add", "Mesh", "Vertex", "Edge", "Face", "UV"]} />
                <div className="ml-[17px] flex shrink-0">
                    <Picker label="Orientation" value="Global" options={["Global", "Local"]} className="w-[114px]">
                        <path d="M4 18V1M1 4L4 1L7 4M4 18H21M18 15L21 18L18 21" />
                        <path d="M8 14L16 5M11 5H16V10" stroke="#999" />
                        <circle cx="4" cy="18" r="2" fill="#272727" />
                    </Picker>
                </div>
                <DropButton label="Pivot point">
                    <path d="M8 8C8 3 11 1 14.500 1C18 1 21 4 21 7.500C21 11 18 13.500 15 13.500M7 8.500C3 9 1 11 1 15C1 18 4 21 7.500 21C11 21 14 18 13.500 14" strokeWidth="1.700" />
                    <circle cx="11" cy="11" r="2.500" fill={LIGHT} stroke="none" />
                </DropButton>
                <SnapGroup />
                <button type="button" aria-label="Proportional editing" className="flex w-7 shrink-0 items-center justify-center rounded-[5px] bg-[#545454]">
                    <Glyph><circle cx="11" cy="11" r="9.500" stroke="#8a8a8a" /></Glyph>
                </button>
            </div>
            <div className="flex h-7 gap-[9px] pr-[11px] pl-[62px]">
                <ModeButtons narrow modes={BOX_MODES} />
                <div className="ml-auto flex items-center gap-1">
                    <Glyph>
                        <path d="M9 6C6 1 2 0 1 3C0 7 3 8 4 10C0 13 2 15 4 15C2 19 5 21 9 18V6M13 6C16 1 20 0 21 3C22 7 19 8 18 10C22 13 20 15 18 15C20 19 17 21 13 18" stroke="#b4b4b4" />
                        <path d="M11 0V22" stroke="#fff" strokeDasharray="3 1.500" />
                    </Glyph>
                    <div className="flex h-7 gap-px overflow-hidden rounded-[5px] bg-[#3a3a3a]">
                        {["X", "Y", "Z"].map((axis) => (
                            <button key={axis} type="button" aria-label={`Mirror ${axis}`} className="w-[23px] bg-[#545454]">{axis}</button>
                        ))}
                    </div>
                </div>
                <button type="button" aria-label="Auto merge" className="flex w-7 items-center justify-center rounded-[5px] bg-[#4f4f4f]">
                    <Glyph>
                        <path d="M1 17H5V21H1ZM16 1H20V5H16Z" stroke="#b4b4b4" />
                        <path d="M3 14C4 8 7 4 13 3M8 19C14 18 17 14 18 8" stroke="#888" strokeDasharray="4 3" />
                    </Glyph>
                </button>
                <button type="button" className="flex w-24 items-center justify-between rounded-[5px] border border-[#3f3f3f] bg-[#272727] pr-1 pl-[10px]">
                    Options <Chevron />
                </button>
            </div>
        </div>
    )
}

const HINTS = [
    { text: "Pick Shortest Path", fill: "M1 9V5C1 2 3 .500 8 .500V10H1Z" },
    { text: "Zoom View", fill: "M6 4H11V12H6Z" },
    { text: "Extrude to Cursor or Add", fill: "M9 .500C14 .500 16 2 16 5V10H9Z" },
]

function StatusBar() {
    return (
        <footer className="flex h-8 shrink-0 items-center overflow-hidden bg-[#1d1d1d] pl-2 text-[#8c8c8c]">
            {HINTS.map((hint) => (
                <div key={hint.text} className="flex w-[350px] shrink-0 items-center gap-4">
                    <svg viewBox="0 0 17 22" fill="none" className="h-[22px] w-[17px]">
                        <rect x="1" y="1" width="15" height="20" rx="4.500" stroke="#8c8c8c" strokeWidth="1.300" />
                        <path d={hint.fill} fill="#8c8c8c" stroke="#1d1d1d" />
                    </svg>
                    <span className="whitespace-nowrap">{hint.text}</span>
                </div>
            ))}
            <span className="ml-auto w-[123px] whitespace-nowrap">Cube | Verts:8/8</span>
        </footer>
    )
}

export default function App() {
    return (
        <div className="flex h-screen flex-col overflow-hidden bg-[#161616] font-['DejaVu_Sans',sans-serif] text-[16px] text-[#e0e0e0]">
            <TopBar />
            <main className="flex min-h-0 flex-1 gap-[3px] pr-[2px]">
                <section aria-label="UV Editor" className="relative min-w-0 flex-[1006] overflow-hidden rounded-md bg-[#323232]">
                    <UvCanvas />
                    <UvHeader />
                    <div className="absolute top-[89px] left-1">
                        <ToolBar
                            label="UV tools"
                            corners={["Select Box", "Annotate"]}
                            groups={[["Select Box", "Cursor"], ["Move", "Rotate", "Scale", "Transform"], ["Annotate"], ["Rip Region"], ["Grab", "Relax", "Pinch"]]}
                        />
                    </div>
                    <div className="absolute top-[90px] right-[14px]"><NavButtons names={["Zoom", "Pan"]} /></div>
                    <CollapseTab />
                </section>
                <section aria-label="3D Viewport" className="relative min-w-0 flex-[1098] overflow-hidden rounded-md bg-linear-to-b from-[#363636] via-[#3a3a3a] to-[#363636]">
                    <SceneCanvas />
                    <SceneHeader />
                    <div className="absolute top-[89px] left-3">
                        <ToolBar
                            label="Mesh tools"
                            corners={["Select Box", "Scale", "Annotate", "Add Cube", "Extrude Region", "Loop Cut", "Knife", "Spin", "Smooth", "Edge Slide", "Shrink Fatten", "Shear", "Rip Region"]}
                            groups={[
                                ["Select Box", "Cursor"],
                                ["Move", "Rotate", "Scale", "Transform"],
                                ["Annotate", "Measure"],
                                ["Add Cube"],
                                ["Extrude Region", "Inset Faces", "Bevel", "Loop Cut", "Knife", "Poly Build", "Spin", "Smooth", "Edge Slide", "Shrink Fatten", "Shear", "Rip Region"],
                            ]}
                        />
                    </div>
                    <div className="absolute top-[87px] left-[99px] leading-[27px] text-white [text-shadow:0_1px_2px_#000]">
                        <p>User Perspective</p>
                        <p>(1) Cube</p>
                    </div>
                    <div className="absolute top-[93px] right-[22px]"><AxisGizmo /></div>
                    <div className="absolute top-[212px] right-[14px]"><NavButtons names={["Zoom", "Pan", "Camera", "Perspective"]} /></div>
                    <CollapseTab />
                </section>
            </main>
            <StatusBar />
            <div className="h-1 shrink-0 border-t-2 border-[#4a4a4a] bg-[#201c26]" />
        </div>
    )
}
